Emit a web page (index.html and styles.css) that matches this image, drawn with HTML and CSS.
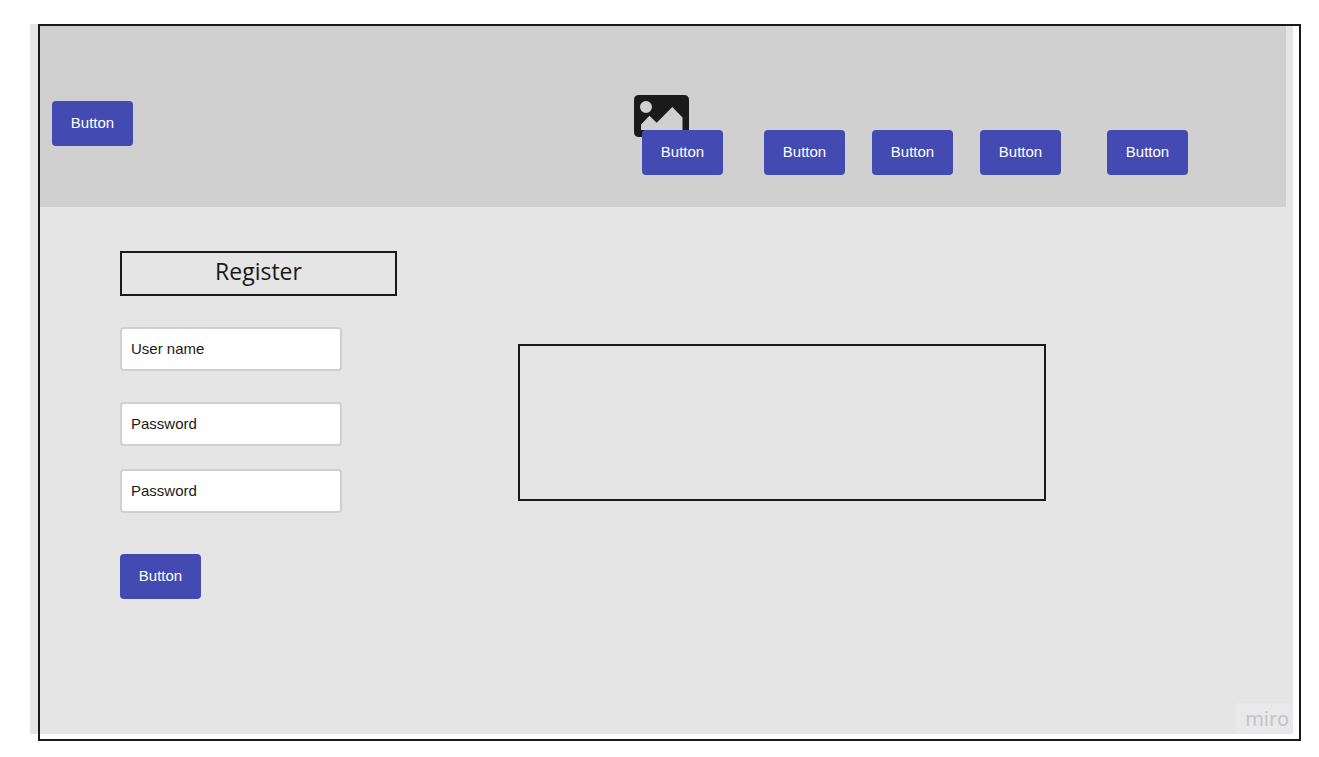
FILE: index.html
```html
<!DOCTYPE html>
<html lang="en">
<head>
<meta charset="utf-8">
<meta name="viewport" content="width=device-width, initial-scale=1">
<title>Register</title>
<link rel="stylesheet" href="styles.css">
</head>
<body>
<div class="board">
  <header class="header">
    <button class="button" type="button">Button</button>
    <nav class="nav" aria-label="Main">
      <svg class="nav-image" viewBox="0 0 55 42" aria-hidden="true">
        <path fill="#1a1a1a" fill-rule="evenodd" d="M5 0H50Q55 0 55 5V37Q55 42 50 42H5Q0 42 0 37V5Q0 0 5 0ZM12 6A6 6 0 1 0 12 18A6 6 0 1 0 12 6ZM7 35H48.500V22.500L38.300 12L22.700 27.700L15.500 20.700L7 29.500Z"/>
      </svg>
      <button class="button" type="button">Button</button>
      <div class="nav-group">
        <button class="button" type="button">Button</button>
        <button class="button" type="button">Button</button>
        <button class="button" type="button">Button</button>
      </div>
      <button class="button" type="button">Button</button>
    </nav>
  </header>
  <main class="main">
    <form class="form">
      <h1 class="title">Register</h1>
      <div class="fields">
        <input class="field" type="text" placeholder="User name" aria-label="User name">
        <div class="passwords">
          <input class="field" type="password" placeholder="Password" aria-label="Password">
          <input class="field" type="password" placeholder="Password" aria-label="Repeat password">
        </div>
      </div>
      <button class="button submit" type="button">Button</button>
    </form>
    <section class="panel" aria-label="Content"></section>
  </main>
  <span class="brand">miro</span>
  <div class="outline"></div>
</div>
</body>
</html>
```
FILE: styles.css
```css
* {
  box-sizing: border-box;
}

body {
  min-height: 100vh;
  margin: 0;
  padding: 24px 26px 16px 30px;
  background: #fff;
  color: #1a1a1a;
  font-family: "Liberation Sans", Arial, sans-serif;
  font-size: 15px;
}

.board {
  position: relative;
  background: #e5e5e5;
}

/* Frame drawn over the board, shifted right and down */
.outline {
  position: absolute;
  inset: 0 -8px -7px 8px;
  border: 2px solid #1a1a1a;
  pointer-events: none;
}

.header {
  display: flex;
  justify-content: space-between;
  align-items: flex-start;
  margin: 0 7px 0 8px;
  padding: 77px 98px 32px 14px;
  background: #d0d0d0;
}

.button {
  width: 81px;
  height: 45px;
  padding: 0 0 2px;
  border: 0;
  border-radius: 4px;
  background: #434bb3;
  color: #fff;
  font: inherit;
}

.nav {
  position: relative;
  display: flex;
  margin-top: 29px;
}

.nav .button {
  position: relative;
}

.nav-group {
  display: flex;
  gap: 27px;
  margin: 0 46px 0 41px;
}

.nav-image {
  position: absolute;
  top: -35px;
  left: -8px;
  width: 55px;
  height: 42px;
}

.main {
  display: flex;
  align-items: flex-start;
  gap: 121px;
  padding: 44px 247px 135px 90px;
}

.form {
  flex: none;
  width: 277px;
}

.title {
  margin: 0 0 31px;
  padding: 1px 0 6px;
  border: 2px solid #1a1a1a;
  font: 400 23px/34px "Open Sans", sans-serif;
  text-align: center;
}

.fields {
  display: grid;
  gap: 31px;
  width: 222px;
}

.passwords {
  display: grid;
  gap: 23px;
}

.field {
  width: 100%;
  height: 44px;
  padding: 0 9px 2px;
  border: 2px solid #d0d0d0;
  border-radius: 4px;
  background: #fff;
  color: #1a1a1a;
  font: inherit;
}

.field::placeholder {
  color: #1a1a1a;
  opacity: 1;
}

.submit {
  margin-top: 41px;
}

.panel {
  flex: 1;
  height: 157px;
  margin-top: 93px;
  border: 2px solid #1a1a1a;
}

.brand {
  position: absolute;
  right: 0;
  bottom: 0;
  padding: 1px 4px 0 9px;
  background: #e9e9e9;
  color: #c3c3cb;
  font: 400 20px/30px "Noto Sans", sans-serif;
}
```
